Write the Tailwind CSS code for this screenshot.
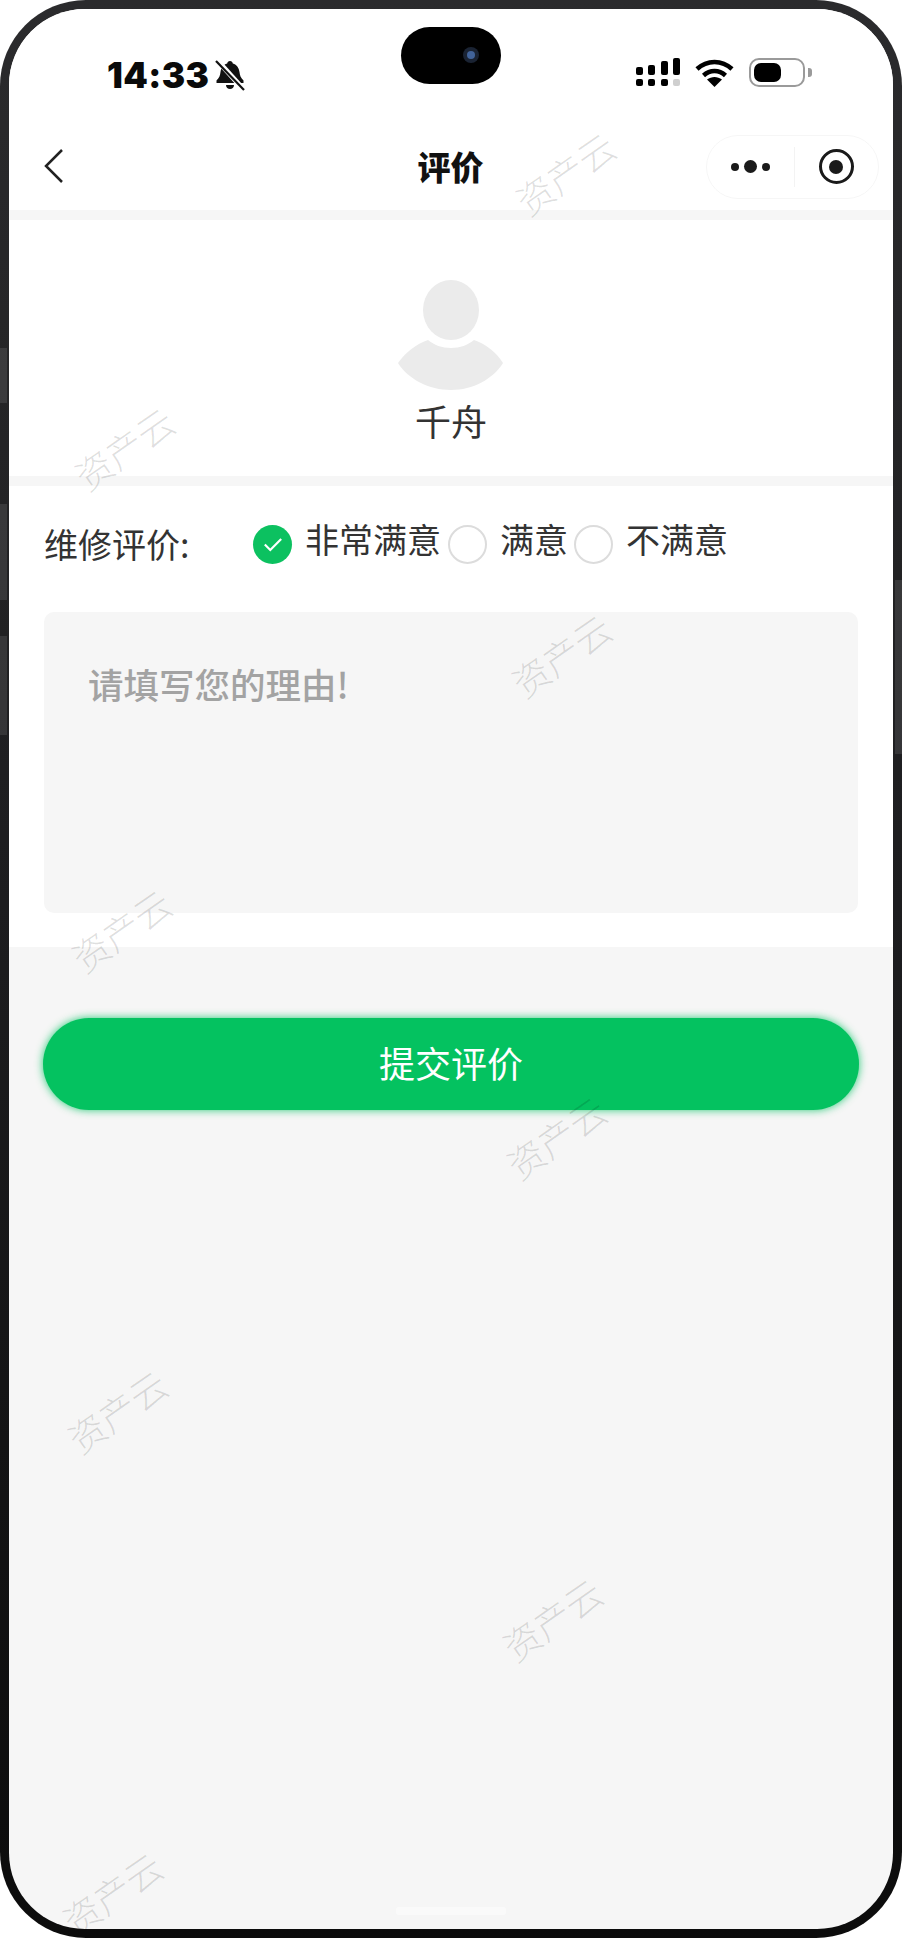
<!DOCTYPE html>
<html lang="zh-CN">
<head>
  <meta charset="UTF-8" />
  <meta name="viewport" content="width=device-width, initial-scale=1.0"/>
  <title>评价</title>
  <script src="https://cdn.jsdelivr.net/npm/@tailwindcss/browser@4"></script>
</head>
<body class="bg-white font-['Noto_Sans_CJK_SC','Noto_Sans',sans-serif]">
  <!-- Phone frame -->
  <div class="relative w-[902px] h-[1938px] p-[9px] rounded-[86px] bg-gradient-to-b from-[#2b2b2d] via-[#1c1c1e] to-[#0c0c0c]">
    <div class="relative w-full h-full rounded-[76px] overflow-hidden bg-[#f6f6f6] flex flex-col">

      <!-- Status bar -->
      <div class="relative h-[115px] bg-white shrink-0 flex justify-between pl-[98px] pr-[81px] pt-[45px]">
        <div class="flex items-start gap-[5px]">
          <span class="font-['Inter',sans-serif] font-black text-[35px] leading-[42px] text-[#0a0a0a] tracking-[0.4px]">14:33</span>
          <svg class="w-[32px] h-[32px] mt-[5px]" viewBox="0 0 32 32">
            <path fill="#111" d="M16 2c1.6 0 2.6 1 2.8 2.400C23 5.500 25 9 25.500 13c.4 3.500 1.300 6 4 8.500V24H2.500v-2.500c2.700-2.500 3.600-5 4-8.500C7 9 9 5.500 13.200 4.400 13.400 3 14.400 2 16 2z"/>
            <path fill="#111" d="M12 26h8c0 2.500-1.800 4-4 4s-4-1.500-4-4z"/>
            <path stroke="#fff" stroke-width="5" d="M3 1l27 30"/>
            <path stroke="#111" stroke-width="2.200" d="M2 2l28 29"/>
          </svg>
        </div>
        <div class="flex items-start gap-[15px] pt-[5px]">
          <!-- Signal -->
          <div class="grid grid-cols-4 gap-x-[5px] gap-y-[4px] w-[44px] mt-[-1px] items-end">
            <div class="h-[8px] w-[7px] rounded-[2px] bg-black"></div>
            <div class="h-[10px] w-[7px] rounded-[2px] bg-black"></div>
            <div class="h-[14px] w-[7px] rounded-[2px] bg-black"></div>
            <div class="h-[17px] w-[7px] rounded-[2px] bg-black"></div>
            <div class="h-[7px] w-[7px] rounded-[2px] bg-black"></div>
            <div class="h-[7px] w-[7px] rounded-[2px] bg-black"></div>
            <div class="h-[7px] w-[7px] rounded-[2px] bg-black"></div>
            <div class="h-[7px] w-[7px] rounded-[2px] bg-[#cfcfcf]"></div>
          </div>
          <!-- Wifi -->
          <svg class="w-[39px] h-[29px] mt-[-1px]" viewBox="0 0 39 29" fill="none" stroke="#000" stroke-width="4.500">
            <path d="M2 11C12 1.500 27 1.500 37 11"/>
            <path d="M8.500 17.500c6.500-6 15.500-6 22 0"/>
            <path fill="#000" stroke="none" d="M19.500 29l-7.500-7.500c4.500-3.500 10.500-3.500 15 0z"/>
          </svg>
          <!-- Battery -->
          <div class="flex items-center gap-[3px] mt-[-1px]">
            <div class="w-[56px] h-[29px] rounded-[10px] border-2 border-[#9a9a9a] p-[3px]">
              <div class="w-[27px] h-full rounded-[7px] bg-black"></div>
            </div>
            <div class="w-[4px] h-[9px] rounded-r-[3px] bg-[#9a9a9a]"></div>
          </div>
        </div>
        <!-- Dynamic island -->
        <div class="absolute left-[392px] top-[18px] w-[100px] h-[57px] rounded-[29px] bg-black">
          <div class="absolute left-[62px] top-[20px] w-[16px] h-[16px] rounded-full bg-[#1a2333] flex items-center justify-center">
            <div class="w-[8px] h-[8px] rounded-full bg-[#41639a]"></div>
          </div>
        </div>
      </div>

      <!-- Nav bar -->
      <div class="relative h-[86px] bg-white shrink-0 flex items-center justify-between pl-[35px] pr-[14px]">
        <svg class="w-[20px] h-[36px] mt-[-2px]" viewBox="0 0 20 36" fill="none" stroke="#222" stroke-width="2.500">
          <path d="M18 2L2 18l16 16"/>
        </svg>
        <h1 class="absolute left-0 right-0 text-center text-[33px] leading-[40px] font-black text-[#111] pr-[1px] mt-[-3px]">评价</h1>
        <div class="w-[173px] h-[64px] rounded-[32px] border border-[#f6f6f6] flex items-center mt-[-1px]">
          <div class="w-[87px] flex items-center justify-center gap-[5px]">
            <div class="w-[8px] h-[8px] rounded-full bg-[#1a1a1a]"></div>
            <div class="w-[13px] h-[13px] rounded-full bg-[#1a1a1a]"></div>
            <div class="w-[8px] h-[8px] rounded-full bg-[#1a1a1a]"></div>
          </div>
          <div class="w-px h-[40px] bg-[#f3f3f3]"></div>
          <div class="flex-1 flex items-center justify-center pr-[1px]">
            <div class="w-[35px] h-[35px] rounded-full border-[3.500px] border-[#1a1a1a] flex items-center justify-center">
              <div class="w-[14px] h-[14px] rounded-full bg-[#1a1a1a]"></div>
            </div>
          </div>
        </div>
      </div>

      <!-- Avatar -->
      <div class="mt-[10px] h-[256px] bg-white shrink-0 flex flex-col items-center pt-[59px]">
        <svg class="w-[106px] h-[112px]" viewBox="0 0 106 112">
          <ellipse cx="53" cy="31" rx="28" ry="30" fill="#ebebeb"/>
          <path fill="#ebebeb" d="M30 61c6 5 14 8 23 8s17-3 23-8c12 4 22 12 29 23-10 16-30 27-52 27S10 100 0 84c8-11 18-19 30-23z"/>
        </svg>
        <div class="text-[36px] leading-[48px] text-[#333] mt-[5px]">千舟</div>
      </div>

      <!-- Rating form -->
      <div class="mt-[10px] h-[461px] bg-white shrink-0 px-[35px] pt-[38px]">
        <div class="flex items-center h-[40px]">
          <span class="w-[208px] text-[34px] leading-[44px] text-[#333] whitespace-nowrap">维修评价:</span>
          <div class="w-[39px] h-[39px] rounded-full bg-[#0cc160] flex items-center justify-center ml-[1px]">
            <svg class="w-[20px] h-[15px]" viewBox="0 0 22 16" fill="none" stroke="#fff" stroke-width="2.400">
              <path d="M2 8l6 6L20 2"/>
            </svg>
          </div>
          <span class="ml-[13px] mb-[11px] w-[143px] text-[34px] leading-[44px] text-[#333] whitespace-nowrap">非常满意</span>
          <div class="w-[39px] h-[39px] rounded-full border-2 border-[#dcdcdc]"></div>
          <span class="ml-[13px] mb-[11px] w-[74px] text-[34px] leading-[44px] text-[#333] whitespace-nowrap">满意</span>
          <div class="w-[39px] h-[39px] rounded-full border-2 border-[#dcdcdc]"></div>
          <span class="ml-[13px] mb-[11px] text-[34px] leading-[44px] text-[#333] whitespace-nowrap">不满意</span>
        </div>
        <textarea rows="3" placeholder="请填写您的理由!" class="block w-full h-[301px] mt-[48px] rounded-[10px] bg-[#f6f6f6] px-[44px] pt-[49px] text-[35.500px] leading-[46px] font-medium text-[#333] placeholder:text-[#a3a3a3] resize-none outline-none"></textarea>
      </div>

      <!-- Submit -->
      <div class="px-[34px] pt-[71px]">
        <button class="w-full h-[92px] rounded-[46px] bg-[#04c260] text-white text-[36px] pb-[4px] shadow-[0_0_9px_rgba(4,194,96,0.85)]">提交评价</button>
      </div>

      <!-- Home indicator -->
      <div class="absolute left-[387px] bottom-[14px] w-[110px] h-[8px] rounded-[3px] bg-[#fafafa]"></div>

      <!-- Watermarks -->
      <div class="absolute left-[556px] top-[164px] -translate-x-1/2 -translate-y-1/2 -rotate-[35deg] text-[37px] leading-none font-light text-black/[0.13] whitespace-nowrap pointer-events-none">资产云</div>
      <div class="absolute left-[115px] top-[439px] -translate-x-1/2 -translate-y-1/2 -rotate-[35deg] text-[37px] leading-none font-light text-black/[0.13] whitespace-nowrap pointer-events-none">资产云</div>
      <div class="absolute left-[552px] top-[646px] -translate-x-1/2 -translate-y-1/2 -rotate-[35deg] text-[37px] leading-none font-light text-black/[0.13] whitespace-nowrap pointer-events-none">资产云</div>
      <div class="absolute left-[112px] top-[921px] -translate-x-1/2 -translate-y-1/2 -rotate-[35deg] text-[37px] leading-none font-light text-black/[0.13] whitespace-nowrap pointer-events-none">资产云</div>
      <div class="absolute left-[547px] top-[1128px] -translate-x-1/2 -translate-y-1/2 -rotate-[35deg] text-[37px] leading-none font-light text-black/[0.13] whitespace-nowrap pointer-events-none">资产云</div>
      <div class="absolute left-[108px] top-[1402px] -translate-x-1/2 -translate-y-1/2 -rotate-[35deg] text-[37px] leading-none font-light text-black/[0.13] whitespace-nowrap pointer-events-none">资产云</div>
      <div class="absolute left-[543px] top-[1610px] -translate-x-1/2 -translate-y-1/2 -rotate-[35deg] text-[37px] leading-none font-light text-black/[0.13] whitespace-nowrap pointer-events-none">资产云</div>
      <div class="absolute left-[103px] top-[1884px] -translate-x-1/2 -translate-y-1/2 -rotate-[35deg] text-[37px] leading-none font-light text-black/[0.13] whitespace-nowrap pointer-events-none">资产云</div>
    </div>

    <!-- Side buttons -->
    <div class="absolute left-0 top-[348px] w-[7px] h-[55px] bg-white/10"></div>
    <div class="absolute left-0 top-[504px] w-[7px] h-[96px] bg-white/10"></div>
    <div class="absolute left-0 top-[636px] w-[7px] h-[99px] bg-white/10"></div>
    <div class="absolute right-0 top-[580px] w-[7px] h-[174px] bg-white/10"></div>
  </div>
</body>
</html>
